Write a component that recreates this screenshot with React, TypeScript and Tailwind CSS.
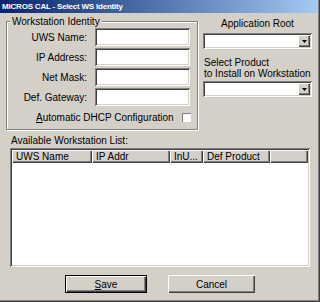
import type { ReactNode } from 'react'

const sunken =
  'bg-white shadow-[inset_1px_1px_0_#808080,inset_-1px_-1px_0_#ffffff,inset_2px_2px_0_#404040,inset_-2px_-2px_0_#d4d0c8]'
const raised =
  'bg-[#d4d0c8] shadow-[inset_1px_1px_0_#ffffff,inset_-1px_-1px_0_#404040,inset_-2px_-2px_0_#808080]'

function Field({ label }: { label: string }) {
  return (
    <div className="flex items-center h-[18px]">
      <span className="w-[81px] text-right pr-[1px]">{label}</span>
      <div className={`ml-[7px] w-[95px] h-[18px] ${sunken}`} />
    </div>
  )
}

function Combo() {
  return (
    <div className={`w-[109px] h-[16px] p-[2px] flex justify-end ${sunken}`}>
      <div className={`w-[12px] h-[12px] flex items-center justify-center ${raised}`}>
        <svg width="5" height="3" viewBox="0 0 5 3">
          <path d="M0 0h5L2.5 3z" fill="#000" />
        </svg>
      </div>
    </div>
  )
}

function Header({ w, children }: { w: string; children?: ReactNode }) {
  return (
    <div className={`${w} h-[13px] pl-[4px] leading-[13px] whitespace-nowrap overflow-hidden ${raised}`}>
      {children}
    </div>
  )
}

export default function App() {
  return (
    <div className="w-[320px] h-[302px] border-r border-b border-[#404040] font-['Liberation_Sans',Arial,sans-serif] text-[10px] text-black">
      <div className="w-full h-full bg-[#d4d0c8] border-r border-b border-[#808080] overflow-hidden">
        <div className="h-[13px] pl-[2px] bg-gradient-to-r from-[#0a246a] to-[#a6caf0] text-white font-bold text-[8px] tracking-[-0.2px] leading-[13px]">
          MICROS CAL - Select WS Identity
        </div>

        <div className="flex">
          {/* Workstation Identity group */}
          <div className="relative ml-[6px] mt-[8px] w-[192px] h-[109px] border border-[#808080] shadow-[inset_1px_1px_0_#ffffff,1px_1px_0_#ffffff]">
            <span className="absolute -top-[7px] left-[3px] px-[2px] bg-[#d4d0c8] leading-[13px]">
              Workstation Identity
            </span>
            <div className="flex flex-col gap-[2px] pt-[6px]">
              <Field label="UWS Name:" />
              <Field label="IP Address:" />
              <Field label="Net Mask:" />
              <Field label="Def. Gateway:" />
              <div className="flex items-center h-[18px] pr-[6px]">
                <span className="ml-[29px]">
                  <span className="underline">A</span>utomatic DHCP Configuration
                </span>
                <div className="ml-auto w-[9px] h-[9px] bg-white shadow-[inset_1px_1px_0_#808080,inset_-1px_-1px_0_#ffffff]" />
              </div>
            </div>
          </div>

          {/* right column */}
          <div className="ml-[5px] w-[109px] flex flex-col">
            <div className="mt-[4px] h-[13px] leading-[13px] text-center">Application Root</div>
            <div className="mt-[3px]">
              <Combo />
            </div>
            <div className="mt-[8px] leading-[11px] pl-[1px]">
              <div>Select Product</div>
              <div>to Install on Workstation</div>
            </div>
            <div className="mt-[2px]">
              <Combo />
            </div>
          </div>
        </div>

        {/* list */}
        <div className="ml-[11px] mt-[5px] leading-[12px]">Available Workstation List:</div>
        <div className={`ml-[10px] mt-[1px] w-[300px] h-[119px] p-[2px] ${sunken}`}>
          <div className="flex">
            <Header w="w-[80px]">UWS Name</Header>
            <Header w="w-[78px]">IP Addr</Header>
            <Header w="w-[33px]">InU...</Header>
            <Header w="w-[67px]">Def Product</Header>
            <Header w="flex-1" />
          </div>
        </div>

        {/* buttons */}
        <div className="flex mt-[8px] pl-[65px] gap-[21px]">
          <button className="w-[82px] h-[18px] border border-black bg-[#d4d0c8] shadow-[inset_1px_1px_0_#ffffff,inset_-1px_-1px_0_#404040,inset_-2px_-2px_0_#808080] text-[10px]">
            <span className="underline">S</span>ave
          </button>
          <button className={`w-[87px] h-[18px] text-[10px] ${raised}`}>Cancel</button>
        </div>
      </div>
    </div>
  )
}
